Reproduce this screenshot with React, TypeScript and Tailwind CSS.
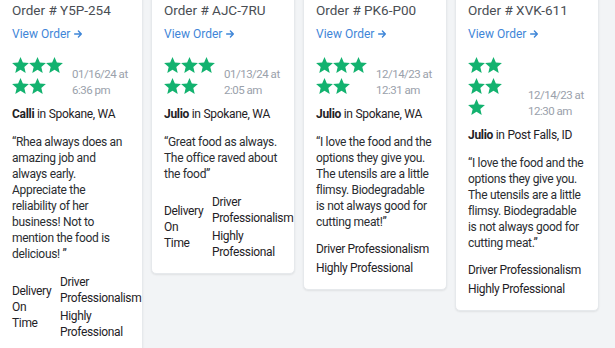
import React from 'react';

type Review = {
    order: string;
    stars: number;
    starsWide: boolean;
    date: [string, string];
    name: string;
    city: string;
    text: string;
    delivery: boolean;
};

const REVIEWS: Review[] = [
    {
        order: 'Y5P-254',
        stars: 5,
        starsWide: true,
        date: ['01/16/24 at', '6:36 pm'],
        name: 'Calli',
        city: 'Spokane, WA',
        text: '\u201cRhea always does an amazing job and always early. Appreciate the reliability of her business! Not to mention the food is delicious! \u201d',
        delivery: true,
    },
    {
        order: 'AJC-7RU',
        stars: 5,
        starsWide: true,
        date: ['01/13/24 at', '2:05 am'],
        name: 'Julio',
        city: 'Spokane, WA',
        text: '\u201cGreat food as always. The office raved about the food\u201d',
        delivery: true,
    },
    {
        order: 'PK6-P00',
        stars: 5,
        starsWide: true,
        date: ['12/14/23 at', '12:31 am'],
        name: 'Julio',
        city: 'Spokane, WA',
        text: '\u201cI love the food and the options they give you. The utensils are a little flimsy. Biodegradable is not always good for cutting meat!\u201d',
        delivery: false,
    },
    {
        order: 'XVK-611',
        stars: 5,
        starsWide: false,
        date: ['12/14/23 at', '12:30 am'],
        name: 'Julio',
        city: 'Post Falls, ID',
        text: '\u201cI love the food and the options they give you. The utensils are a little flimsy. Biodegradable is not always good for cutting meat.\u201d',
        delivery: false,
    },
];

function Star() {
    return (
        <svg viewBox="2 2 20 19" className="w-[17px] h-[16px] fill-[#13b26f]">
            <path d="M12 17.27L18.18 21l-1.64-7.03L22 9.24l-7.19-.61L12 2 9.19 8.63 2 9.24l5.46 4.73L5.82 21z" />
        </svg>
    );
}

function ReviewCard({ review }: { review: Review }) {
    return (
        <div className="w-[144px] shrink-0 bg-white border border-[#e6e9ec] rounded-[5px] shadow-[0_1px_2px_rgba(0,0,0,0.08)] pl-[12px] pr-[13px] pt-[13px] pb-[13px]">
            <p className="text-[13.5px] leading-[18px] font-normal text-[#4a4e54] whitespace-nowrap">Order # {review.order}</p>
            <a className="mt-[7px] flex items-center gap-[3px] text-[12px] leading-[16px] text-[#3f86d8]">
                View Order
                <svg viewBox="0 0 24 24" className="w-[10px] h-[10px] stroke-[#3f86d8]" fill="none" strokeWidth="3.4" strokeLinecap="round" strokeLinejoin="round">
                    <path d="M4 12h16M13 5l7 7-7 7" />
                </svg>
            </a>

            <div className="mt-[15px] flex items-end">
                <div className="w-[60px] shrink-0 mb-[4px]">
                    <div className={review.starsWide ? 'w-[51px] flex flex-wrap gap-y-[5px]' : 'w-[34px] flex flex-wrap gap-y-[5px]'}>
                        {Array.from({ length: review.stars }).map((_, i) => (
                            <Star key={i} />
                        ))}
                    </div>
                </div>
                <div className="text-[11.5px] leading-[16px] tracking-[-0.5px] text-[#9aa1ab] whitespace-nowrap">
                    <p>{review.date[0]}</p>
                    <p>{review.date[1]}</p>
                </div>
            </div>

            <p className="mt-[8px] text-[12px] leading-[16px] tracking-[-0.3px] text-[#1f2226] whitespace-nowrap">
                <span className="font-bold">{review.name}</span> in {review.city}
            </p>

            <p className="mt-[12px] text-[12px] leading-[16px] tracking-[-0.3px] text-[#2a2d31]">{review.text}</p>

            {review.delivery ? (
                <div className="mt-[12px] flex items-center text-[12px] leading-[16px] tracking-[-0.35px] text-[#1f2226]">
                    <p className="w-[40px] shrink-0">Delivery On Time</p>
                    <div className="ml-[8px] shrink-0 w-[80px] flex flex-col gap-[2px]">
                        <p>Driver Professionalism</p>
                        <p>Highly Professional</p>
                    </div>
                </div>
            ) : (
                <div className="mt-[11px] flex flex-col gap-[3px] text-[12px] leading-[16px] tracking-[-0.35px] text-[#1f2226] whitespace-nowrap">
                    <p>Driver Professionalism</p>
                    <p>Highly Professional</p>
                </div>
            )}
        </div>
    );
}

export default function App() {
    return (
        <div className="w-[615px] h-[348px] overflow-hidden bg-[#f2f4f6]" style={{ fontFamily: 'Roboto, "Liberation Sans", sans-serif' }}>
            <div className="-ml-[1px] -mt-[13px] flex items-start gap-[8px]">
                {REVIEWS.map((r) => (
                    <ReviewCard key={r.order} review={r} />
                ))}
            </div>
        </div>
    );
}
